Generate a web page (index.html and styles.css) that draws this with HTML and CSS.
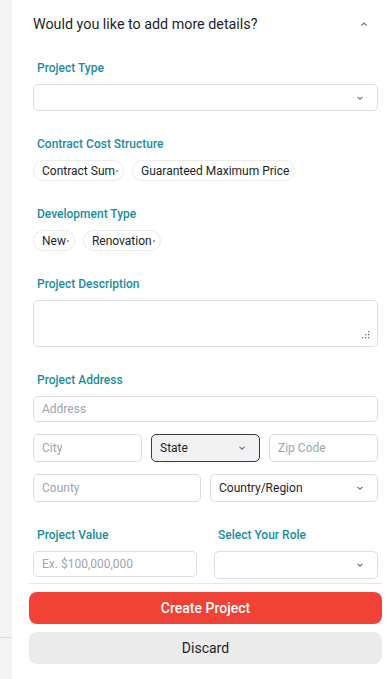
FILE: index.html
```html
<!DOCTYPE html>
<html>
<head>
<meta charset="utf-8">
<link rel="stylesheet" href="styles.css">
</head>
<body>
<div class="page">
  <aside class="rail"><div class="rail-top"></div></aside>
  <main class="panel">
    <div class="scroll">
      <div class="head">
        <h2 class="title">Would you like to add more details?</h2>
        <svg class="caret-up" width="10" height="6" viewBox="0 0 10 6"><path d="M2.5 4.5 L5 2 L7.5 4.5" fill="none" stroke="#6b7280" stroke-width="1.1"/></svg>
      </div>
      <div class="form">
        <div class="group">
          <label class="label">Project Type</label>
          <div class="field select tall"><span></span><svg class="chev" width="10" height="6" viewBox="0 0 10 6"><path d="M2.5 1.8 L5 4.2 L7.5 1.8" fill="none" stroke="#6b7280" stroke-width="1.1"/></svg></div>
        </div>
        <div class="group">
          <label class="label">Contract Cost Structure</label>
          <div class="chips">
            <span class="chip">Contract Sum<i class="dot"></i></span>
            <span class="chip">Guaranteed Maximum Price</span>
          </div>
        </div>
        <div class="group">
          <label class="label">Development Type</label>
          <div class="chips">
            <span class="chip">New<i class="dot"></i></span>
            <span class="chip">Renovation<i class="dot"></i></span>
          </div>
        </div>
        <div class="group">
          <label class="label">Project Description</label>
          <div class="field textarea">
            <svg class="grip" width="8" height="8" viewBox="0 0 8 8"><g fill="#6b7280"><rect x="6" y="0" width="1.3" height="1.3"/><rect x="3" y="3" width="1.3" height="1.3"/><rect x="6" y="3" width="1.3" height="1.3"/><rect x="0" y="6" width="1.3" height="1.3"/><rect x="3" y="6" width="1.3" height="1.3"/><rect x="6" y="6" width="1.3" height="1.3"/></g></svg>
          </div>
        </div>
        <div class="group">
          <label class="label">Project Address</label>
          <div class="rows">
            <div class="field short"><span class="ph">Address</span></div>
            <div class="row3">
              <div class="field"><span class="ph">City</span></div>
              <div class="field select active"><span class="val">State</span><svg class="chev" width="10" height="6" viewBox="0 0 10 6"><path d="M2.5 1.8 L5 4.2 L7.5 1.8" fill="none" stroke="#6b7280" stroke-width="1.1"/></svg></div>
              <div class="field"><span class="ph">Zip Code</span></div>
            </div>
            <div class="row2">
              <div class="field"><span class="ph">County</span></div>
              <div class="field select"><span class="val">Country/Region</span><svg class="chev" width="10" height="6" viewBox="0 0 10 6"><path d="M2.5 1.8 L5 4.2 L7.5 1.8" fill="none" stroke="#6b7280" stroke-width="1.1"/></svg></div>
            </div>
          </div>
        </div>
        <div class="group split">
          <div class="col">
            <label class="label">Project Value</label>
            <div class="field short"><span class="ph">Ex. $100,000,000</span></div>
          </div>
          <div class="col">
            <label class="label">Select Your Role</label>
            <div class="field select"><span></span><svg class="chev" width="10" height="6" viewBox="0 0 10 6"><path d="M2.5 1.8 L5 4.2 L7.5 1.8" fill="none" stroke="#6b7280" stroke-width="1.1"/></svg></div>
          </div>
        </div>
      </div>
    </div>
    <footer class="footer">
      <button class="btn primary">Create Project</button>
      <button class="btn secondary">Discard</button>
    </footer>
  </main>
</div>
</body>
</html>
```
FILE: styles.css
```css
* { box-sizing: border-box; }
html, body { margin: 0; padding: 0; }
body {
  font-family: Roboto, "Liberation Sans", sans-serif;
  color: #1f2430;
  background: #fff;
}
.page {
  display: flex;
  width: 385px;
  height: 679px;
  overflow: hidden;
}
.rail {
  width: 12px;
  flex: none;
  background: #f3f3f3;
}
.rail-top {
  height: 638px;
  border-bottom: 1px solid #dcdcdc;
}
.panel {
  flex: 1;
  display: flex;
  flex-direction: column;
  padding: 0 3px 0 17px;
}
.scroll {
  padding: 0 0 4px 0;
  border-bottom: 1px solid #e6e6e6;
}
.head {
  display: flex;
  align-items: center;
  justify-content: space-between;
  height: 48px;
  padding: 0 13px 0 4px;
}
.title {
  margin: 0;
  font-size: 14.3px;
  font-weight: 400;
  color: #1b1f2a;
}
.form {
  display: flex;
  flex-direction: column;
  gap: 25px;
  padding: 12px 4px 0 4px;
}
.group {
  display: flex;
  flex-direction: column;
  gap: 8px;
}
.label {
  display: block;
  font-size: 12px;
  line-height: 16px;
  font-weight: 500;
  color: #1a8d9c;
  padding-left: 4px;
}
.field {
  height: 28px;
  border: 1px solid #dedede;
  border-radius: 5px;
  background: #fff;
  display: flex;
  align-items: center;
  padding: 0 8px;
  font-size: 12px;
}
.field.short { height: 26px; }
.field.tall { height: 27px; }
.ph { color: #a0a4ad; }
.val { color: #1b1f2a; }
.select { justify-content: space-between; padding-right: 12px; }
.select.active {
  background: #f1f1f3;
  border-color: #3a3a3a;
}
.chips {
  display: flex;
  gap: 8px;
}
.chip {
  height: 21px;
  display: inline-flex;
  align-items: center;
  padding: 0 5px 0 8px;
  border: 1px solid #ebebeb;
  border-radius: 11px;
  font-size: 12px;
  color: #1b1f2a;
}
.dot {
  display: inline-block;
  width: 2px;
  height: 2px;
  background: #a0a0a0;
  margin-left: 1px;
}
.textarea {
  height: 47px;
  align-items: flex-end;
  justify-content: flex-end;
  padding: 0 7px 7px 0;
}
.rows {
  display: flex;
  flex-direction: column;
  gap: 12px;
}
.row3 {
  display: grid;
  grid-template-columns: 1fr 1fr 1fr;
  gap: 9px;
}
.row2 {
  display: grid;
  grid-template-columns: 1fr 1fr;
  gap: 9px;
}
.split {
  flex-direction: row;
  gap: 17px;
}
.col {
  flex: 1;
  display: flex;
  flex-direction: column;
  gap: 8px;
}
.footer {
  display: flex;
  flex-direction: column;
  gap: 8px;
  padding-top: 8px;
}
.btn {
  height: 32px;
  border: none;
  border-radius: 8px;
  font-family: Roboto, "Liberation Sans", sans-serif;
  font-size: 14px;
}
.primary {
  background: #f04236;
  color: #fff;
  font-weight: 500;
}
.secondary {
  background: #ebebeb;
  color: #1b1f2a;
}
```
